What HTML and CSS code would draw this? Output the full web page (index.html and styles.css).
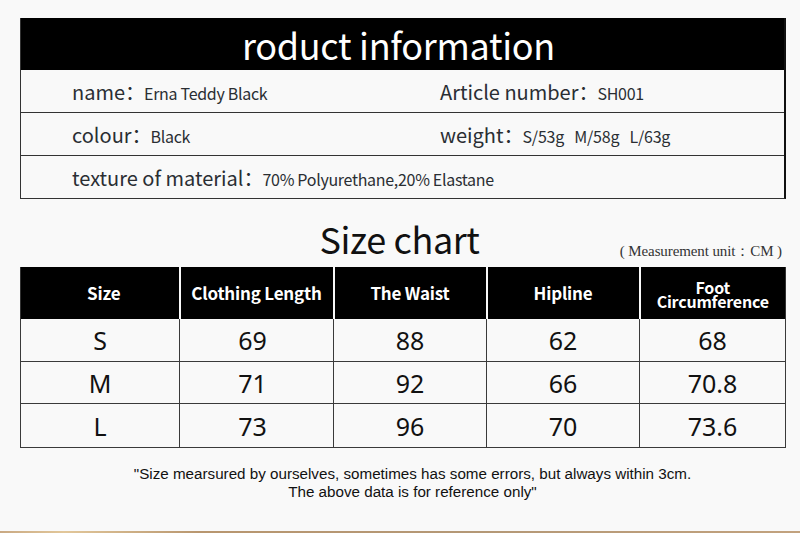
FILE: index.html
```html
<!DOCTYPE html>
<html lang="en">
<head>
<meta charset="utf-8">
<title>Product information</title>
<link rel="stylesheet" href="styles.css">
</head>
<body>
<div class="page">
  <section class="info">
    <div class="info-head">roduct information</div>
    <div class="info-row">
      <div class="cell"><span class="lbl">name：</span><span class="val">Erna Teddy Black</span></div>
      <div class="cell"><span class="lbl">Article number：</span><span class="val">SH001</span></div>
    </div>
    <div class="info-row">
      <div class="cell"><span class="lbl">colour：</span><span class="val">Black</span></div>
      <div class="cell"><span class="lbl">weight：</span><span class="val wt">S/53g&nbsp;&nbsp; M/58g&nbsp;&nbsp; L/63g</span></div>
    </div>
    <div class="info-row single">
      <div class="cell"><span class="lbl">texture of material：</span><span class="val">70% Polyurethane,20% Elastane</span></div>
    </div>
  </section>

  <div class="chart-title">
    <span></span>
    <h2>Size chart</h2>
    <span class="unit">( Measurement unit：CM )</span>
  </div>

  <table class="chart">
    <colgroup>
      <col class="c1"><col class="c2"><col class="c3"><col class="c4"><col class="c5">
    </colgroup>
    <thead>
      <tr>
        <th class="first">Size</th>
        <th>Clothing Length</th>
        <th>The Waist</th>
        <th>Hipline</th>
        <th class="two"><span class="ln">Foot</span><span class="ln">Circumference</span></th>
      </tr>
    </thead>
    <tbody>
      <tr class="r1"><td>S</td><td class="shift">69</td><td>88</td><td>62</td><td>68</td></tr>
      <tr class="r2"><td>M</td><td class="shift">71</td><td>92</td><td>66</td><td>70.8</td></tr>
      <tr class="r3"><td>L</td><td class="shift">73</td><td>96</td><td>70</td><td>73.6</td></tr>
    </tbody>
  </table>

  <p class="note">"Size mearsured by ourselves, sometimes has some errors, but always within 3cm.<br>The above data is for reference only"</p>
</div>
<div class="strip"></div>
</body>
</html>
```

FILE: styles.css
```css
html, body {
  margin: 0;
  padding: 0;
  background: #f9f9f9;
}
body {
  width: 800px;
  height: 533px;
  overflow: hidden;
  display: flex;
  flex-direction: column;
}
.page {
  flex: 1;
  padding: 18px 15px 0 20px;
  font-family: "Noto Sans CJK SC", "Noto Sans", sans-serif;
  color: #2b2f33;
}
.info {
  width: 763px;
  border-left: 1px solid #333;
  border-right: 2px solid #111;
  border-bottom: 1px solid #333;
}
.info-head {
  height: 52px;
  background: #000;
  color: #fff;
  font-size: 36px;
  line-height: 52px;
  text-align: center;
  padding-right: 8px;
  letter-spacing: -0.3px;
}
.info-row {
  display: grid;
  grid-template-columns: 368px 1fr;
  height: 42px;
  padding-left: 51px;
  border-top: 1px solid #333;
}
.info-row.single {
  grid-template-columns: 1fr;
}
.info-row:nth-child(2) {
  border-top: none;
}
.cell {
  display: flex;
  align-items: center;
  white-space: nowrap;
}
.lbl {
  font-size: 20px;
  color: #2a2e33;
}
.val {
  font-size: 16px;
  color: #2a2e33;
  letter-spacing: -0.3px;
  padding-top: 3px;
  margin-left: -1px;
}
.val.wt {
  letter-spacing: -0.2px;
}
.chart-title {
  display: grid;
  grid-template-columns: 1fr auto 1fr;
  align-items: end;
  height: 68px;
  width: 765px;
}
.chart-title h2 {
  margin: 0 6px 6px 0;
  font-weight: 400;
  font-size: 36px;
  line-height: 46px;
  color: #111;
  letter-spacing: -0.4px;
}
.unit {
  justify-self: end;
  font-family: "Liberation Serif", serif;
  font-size: 15px;
  color: #333;
  margin: 0 3px 6px 0;
  white-space: nowrap;
  letter-spacing: -0.1px;
}
.chart {
  width: 765px;
  table-layout: fixed;
  border-collapse: collapse;
}
.c1 { width: 159px; }
.c2 { width: 154px; }
.c3 { width: 153px; }
.c4 { width: 153px; }
.c5 { width: 146px; }
.chart th {
  height: 51px;
  padding: 0;
  background: #000;
  color: #fff;
  font-family: "Noto Sans CJK SC", "Noto Sans", sans-serif;
  font-weight: 700;
  font-size: 17px;
  line-height: 20px;
  text-align: center;
  border-left: 2px solid #f9f9f9;
  letter-spacing: -0.2px;
}
.chart th.first {
  border-left: 1px solid #333;
  padding-left: 8px;
}
.chart th:last-child {
  border-right: 1px solid #333;
}
.chart th.two {
  font-size: 16px;
  padding-top: 1px;
}
.ln {
  display: block;
  height: 14px;
  line-height: 14px;
  overflow: visible;
}
.chart td {
  padding: 0;
  border: 1px solid #3a3a3a;
  text-align: center;
  font-family: "Noto Sans", sans-serif;
  font-size: 25px;
  color: #111;
}
.chart td.shift {
  padding-right: 8px;
}
.chart tbody tr:first-child td { border-top: none; }
.r1 td { height: 42px; }
.r2 td { height: 41px; }
.r3 td { height: 43px; }
.note {
  margin: 17px 0 0 0;
  padding-left: 10px;
  width: 765px;
  text-align: center;
  font-family: "Liberation Sans", Arial, sans-serif;
  font-size: 15.2px;
  line-height: 18px;
  color: #111;
}
.strip {
  height: 2px;
  background: linear-gradient(90deg, #c9a983 0%, #e2c79a 8%, #b8966f 25%, #b49876 60%, #c2a27e 100%);
}
```
